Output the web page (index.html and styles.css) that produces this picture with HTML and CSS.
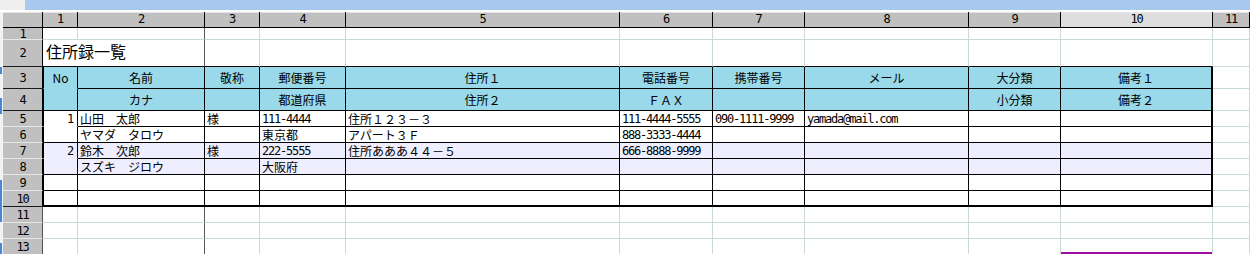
FILE: index.html
```html
<!DOCTYPE html>
<html lang="ja">
<head>
<meta charset="utf-8">
<title>住所録一覧</title>
<link rel="stylesheet" href="styles.css">
</head>
<body>
<div class="top"><div class="top-l"></div><div class="top-r"></div></div>
<div class="sheet">
  <div class="strip"></div>
  <div class="grid">
    <div class="row h16">
      <div class="ch corner"></div>
      <div class="ch">1</div><div class="ch">2</div><div class="ch">3</div><div class="ch">4</div><div class="ch">5</div>
      <div class="ch">6</div><div class="ch">7</div><div class="ch">8</div><div class="ch">9</div><div class="ch sel">10</div><div class="ch">11</div>
    </div>
    <div class="row h12">
      <div class="rh">1</div>
      <div class="c"></div><div class="c fz"></div><div class="c"></div><div class="c"></div><div class="c"></div>
      <div class="c"></div><div class="c"></div><div class="c"></div><div class="c"></div><div class="c"></div><div class="c"></div>
    </div>
    <div class="row h27">
      <div class="rh dk">2</div>
      <div class="c fz tt title span2">住所録一覧</div><div class="c tt"></div><div class="c tt"></div><div class="c tt"></div>
      <div class="c tt"></div><div class="c tt"></div><div class="c tt"></div><div class="c tt"></div><div class="c tt"></div><div class="c"></div>
    </div>
    <div class="row h22">
      <div class="rh dk">3</div>
      <div class="c t l hd nb">No</div><div class="c t hd">名前</div><div class="c t hd">敬称</div><div class="c t hd">郵便番号</div><div class="c t hd">住所１</div>
      <div class="c t hd">電話番号</div><div class="c t hd">携帯番号</div><div class="c t hd">メール</div><div class="c t hd">大分類</div><div class="c t hd r">備考１</div><div class="c"></div>
    </div>
    <div class="row h22">
      <div class="rh dk">4</div>
      <div class="c t l hd"></div><div class="c t hd">カナ</div><div class="c t hd"></div><div class="c t hd">都道府県</div><div class="c t hd">住所２</div>
      <div class="c t hd">ＦＡＸ</div><div class="c t hd"></div><div class="c t hd"></div><div class="c t hd">小分類</div><div class="c t hd r">備考２</div><div class="c"></div>
    </div>
    <div class="row h16">
      <div class="rh">5</div>
      <div class="c t l num nb m">1</div><div class="c t">山田　太郎</div><div class="c t">様</div><div class="c t m">111-4444</div><div class="c t">住所１２３－３</div>
      <div class="c t m">111-4444-5555</div><div class="c t m">090-1111-9999</div><div class="c t m">yamada@mail.com</div><div class="c t"></div><div class="c t r"></div><div class="c"></div>
    </div>
    <div class="row h16">
      <div class="rh">6</div>
      <div class="c t l"></div><div class="c t">ヤマダ　タロウ</div><div class="c t"></div><div class="c t">東京都</div><div class="c t">アパート３Ｆ</div>
      <div class="c t m">888-3333-4444</div><div class="c t"></div><div class="c t"></div><div class="c t"></div><div class="c t r"></div><div class="c"></div>
    </div>
    <div class="row h16">
      <div class="rh">7</div>
      <div class="c t l lv num nb m">2</div><div class="c t lv">鈴木　次郎</div><div class="c t lv">様</div><div class="c t lv m">222-5555</div><div class="c t lv">住所あああ４４－５</div>
      <div class="c t lv m">666-8888-9999</div><div class="c t lv"></div><div class="c t lv"></div><div class="c t lv"></div><div class="c t lv r"></div><div class="c"></div>
    </div>
    <div class="row h16">
      <div class="rh">8</div>
      <div class="c t l lv"></div><div class="c t lv">スズキ　ジロウ</div><div class="c t lv"></div><div class="c t lv">大阪府</div><div class="c t lv"></div>
      <div class="c t lv"></div><div class="c t lv"></div><div class="c t lv"></div><div class="c t lv"></div><div class="c t lv r"></div><div class="c"></div>
    </div>
    <div class="row h16">
      <div class="rh">9</div>
      <div class="c t l"></div><div class="c t"></div><div class="c t"></div><div class="c t"></div><div class="c t"></div>
      <div class="c t"></div><div class="c t"></div><div class="c t"></div><div class="c t"></div><div class="c t r"></div><div class="c"></div>
    </div>
    <div class="row h16">
      <div class="rh dk">10</div>
      <div class="c t l b"></div><div class="c t b"></div><div class="c t b"></div><div class="c t b"></div><div class="c t b"></div>
      <div class="c t b"></div><div class="c t b"></div><div class="c t b"></div><div class="c t b"></div><div class="c t b r"></div><div class="c"></div>
    </div>
    <div class="row h16">
      <div class="rh out">11</div>
      <div class="c"></div><div class="c fz"></div><div class="c"></div><div class="c"></div><div class="c"></div>
      <div class="c"></div><div class="c"></div><div class="c"></div><div class="c"></div><div class="c"></div><div class="c"></div>
    </div>
    <div class="row h16">
      <div class="rh out">12</div>
      <div class="c"></div><div class="c fz"></div><div class="c"></div><div class="c"></div><div class="c"></div>
      <div class="c"></div><div class="c"></div><div class="c"></div><div class="c"></div><div class="c"></div><div class="c"></div>
    </div>
    <div class="row h16">
      <div class="rh out">13</div>
      <div class="c"></div><div class="c fz"></div><div class="c"></div><div class="c"></div><div class="c"></div>
      <div class="c"></div><div class="c"></div><div class="c"></div><div class="c"></div><div class="c pb"></div><div class="c"></div>
    </div>
  </div>
</div>
</body>
</html>
```

FILE: styles.css
```css
:root {
  --grid: #c9d9d5;
  --hdr: #c0c0c0;
  --sky: #99d9ea;
  --lav: #eeeeff;
}

html, body {
  margin: 0;
  padding: 0;
  overflow: hidden;
  background: #ffffff;
}

body {
  font-family: "Noto Sans CJK JP", "Noto Sans", sans-serif;
  color: #000;
}

.top {
  display: flex;
  height: 10px;
  margin-bottom: 2px;
}

.top-l {
  width: 25px;
  background: #eeeeee;
}

.top-r {
  flex: 1;
  background: #a7c9ee;
}

.sheet {
  display: flex;
}

.strip {
  width: 3px;
  flex: none;
  background:
    linear-gradient(to bottom,
      #f2f2f2 0, #f2f2f2 55px,
      #4b86d6 55px, #4b86d6 62px,
      #f2f2f2 62px, #f2f2f2 86px,
      #4b86d6 86px, #4b86d6 102px,
      #f2f2f2 102px, #f2f2f2 168px,
      #4b86d6 168px, #4b86d6 210px,
      #f2f2f2 210px, #f2f2f2 231px,
      #4b86d6 231px, #4b86d6 260px);
  background-size: 2px 100%;
  background-repeat: no-repeat;
  background-color: #f2f2f2;
}

.grid {
  flex: 1;
  display: flex;
  flex-direction: column;
}

.row {
  display: grid;
  grid-template-columns: 40px 35px 127px 55px 86px 274px 93px 92px 164px 92px 152px 1fr;
}

.h12 { height: 12px; }
.h16 { height: 16px; }
.h22 { height: 22px; }
.h27 { height: 27px; }

.ch, .rh, .c {
  box-sizing: border-box;
  display: flex;
  align-items: center;
  white-space: nowrap;
  overflow: hidden;
}

/* column header */
.ch {
  justify-content: center;
  background: var(--hdr);
  border-right: 1px solid #000;
  border-bottom: 1px solid #000;
  box-shadow: inset 0 1px 0 #e4e4e4;
  font-family: "DejaVu Sans Mono", monospace;
  font-size: 12px;
  letter-spacing: -1.2px;
  line-height: 13px;
}

.ch.sel {
  background: #dedede;
}

/* row header */
.rh {
  justify-content: center;
  background: var(--hdr);
  border-right: 1px solid #000;
  border-bottom: 1px solid #e6e6e6;
  font-family: "DejaVu Sans Mono", monospace;
  font-size: 12px;
  letter-spacing: -1.2px;
  line-height: 10px;
  overflow: visible;
}

.rh.dk {
  border-bottom-color: #1a1a1a;
}

.rh.out {
  border-right-color: #505050;
}

/* cells */
.c {
  border-right: 1px solid var(--grid);
  border-bottom: 1px solid var(--grid);
  padding: 0 2px;
  font-size: 12px;
  line-height: 14px;
  background: #fff;
}

.span2 {
  grid-column: span 2;
}

.title {
  font-size: 16px;
  line-height: 20px;
  padding-left: 3px;
  padding-bottom: 5px;
}

.fz {
  border-right-color: #5a5a5a;
}

.tt {
  border-bottom-color: #000;
}

.t {
  border-right-color: #000;
  border-bottom-color: #000;
}

.t.l {
  border-left: 1px solid #000;
}

.t.r {
  border-right-width: 2px;
}

.t.b {
  border-bottom-width: 2px;
}

.hd {
  background: var(--sky);
  justify-content: center;
}

.lv {
  background: var(--lav);
}

.c.nb {
  border-bottom-color: transparent;
}

.num {
  justify-content: flex-end;
  padding-right: 4px;
}

.m {
  font-family: "DejaVu Sans Mono", monospace;
  font-size: 12px;
  letter-spacing: -1.2px;
}

.pb {
  box-shadow: inset 0 -2px 0 #a010a0;
}
```
